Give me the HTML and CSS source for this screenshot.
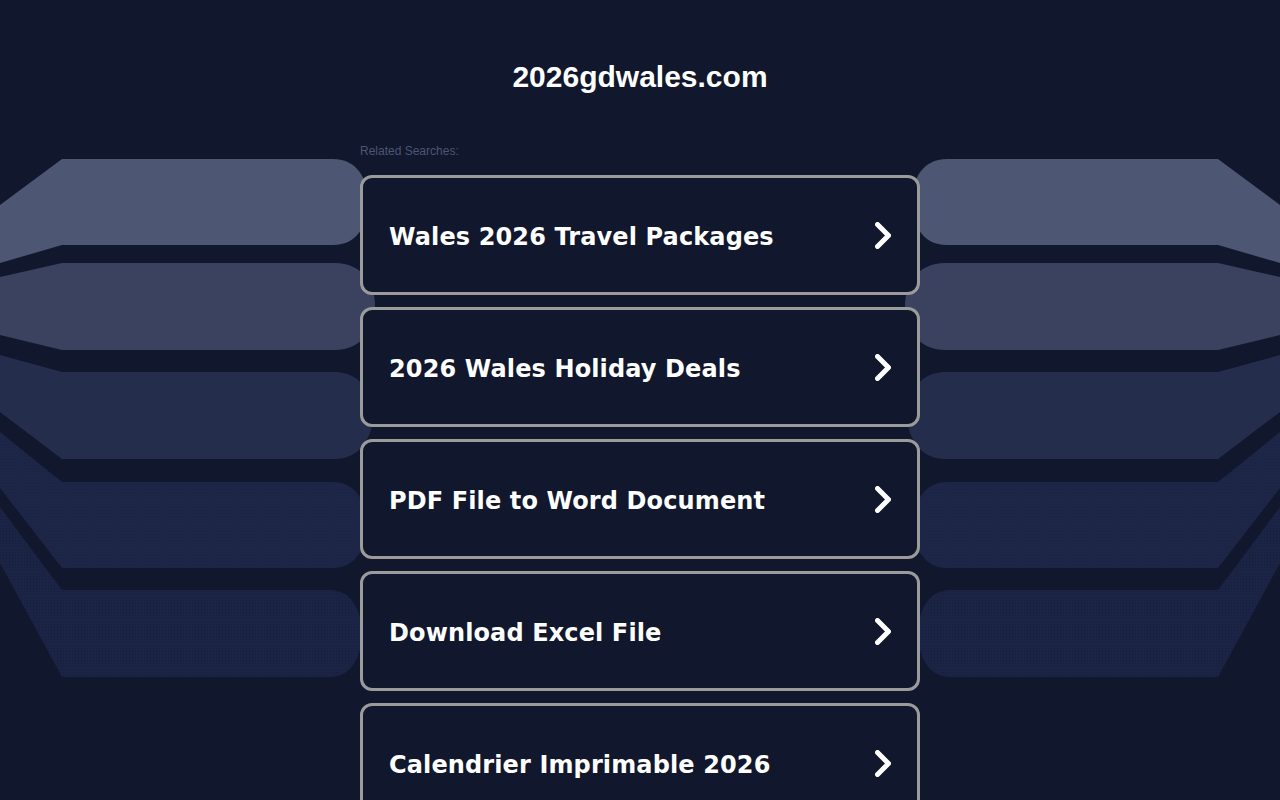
FILE: index.html
```html
<!DOCTYPE html>
<html lang="en">
<head>
<meta charset="utf-8">
<title>2026gdwales.com</title>
<link rel="stylesheet" href="styles.css">
</head>
<body>
<svg class="bg-art" width="1280" height="800" viewBox="0 0 1280 800" aria-hidden="true">
  <defs>
    <pattern id="dots" width="3" height="3" patternUnits="userSpaceOnUse">
      <rect x="0" y="0" width="1" height="1" fill="#141b38"/>
    </pattern>
    <g id="bands">
      <path fill="#4d5672" d="M62,159 L333,159 C358,159 368,180 368,202 C368,224 358,245 333,245 L62,245 L0,263 L0,205 Z"/>
      <path fill="#3a4260" d="M62,263 L335,263 C362,263 375,284 375,306 C375,328 362,350 335,350 L62,350 L0,335 L0,277 Z"/>
      <path fill="#252d4c" d="M62,372 L335,372 C360,372 373,393 373,415 C373,437 360,459 335,459 L62,459 L0,412 L0,355 Z"/>
      <path fill="#1d2646" d="M62,482 L333,482 C356,482 367,503 367,525 C367,547 356,568 333,568 L62,568 L0,488 L0,432 Z"/>
      <path fill="url(#dots)" opacity="0.4" d="M62,482 L333,482 C356,482 367,503 367,525 C367,547 356,568 333,568 L62,568 L0,488 L0,432 Z"/>
      <path fill="#1c2446" d="M62,590 L330,590 C352,590 362,612 362,633 C362,655 352,677 330,677 L62,677 L0,563 L0,507 Z"/>
      <path fill="url(#dots)" opacity="0.7" d="M62,590 L330,590 C352,590 362,612 362,633 C362,655 352,677 330,677 L62,677 L0,563 L0,507 Z"/>
    </g>
  </defs>
  <use href="#bands"/>
  <use href="#bands" transform="translate(1280,0) scale(-1,1)"/>
</svg>

<main class="page">
  <h1 class="domain">2026gdwales.com</h1>
  <section class="related">
    <p class="related-label">Related Searches:</p>
    <ul class="links">
      <li><a class="link-card" href="#"><span class="link-text">Wales 2026 Travel Packages</span><svg class="chev" width="16" height="27" viewBox="0 0 16 27"><path d="M2.5 2.5 L13.5 13.5 L2.5 24.5"/></svg></a></li>
      <li><a class="link-card" href="#"><span class="link-text">2026 Wales Holiday Deals</span><svg class="chev" width="16" height="27" viewBox="0 0 16 27"><path d="M2.5 2.5 L13.5 13.5 L2.5 24.5"/></svg></a></li>
      <li><a class="link-card" href="#"><span class="link-text">PDF File to Word Document</span><svg class="chev" width="16" height="27" viewBox="0 0 16 27"><path d="M2.5 2.5 L13.5 13.5 L2.5 24.5"/></svg></a></li>
      <li><a class="link-card" href="#"><span class="link-text">Download Excel File</span><svg class="chev" width="16" height="27" viewBox="0 0 16 27"><path d="M2.5 2.5 L13.5 13.5 L2.5 24.5"/></svg></a></li>
      <li><a class="link-card" href="#"><span class="link-text">Calendrier Imprimable 2026</span><svg class="chev" width="16" height="27" viewBox="0 0 16 27"><path d="M2.5 2.5 L13.5 13.5 L2.5 24.5"/></svg></a></li>
    </ul>
  </section>
</main>
</body>
</html>
```

FILE: styles.css
```css
html, body {
  margin: 0;
  padding: 0;
  background: #11172c;
  overflow: hidden;
  height: 800px;
}

body {
  position: relative;
  font-family: "Liberation Sans", Arial, sans-serif;
}

.bg-art {
  position: absolute;
  left: 0;
  top: 0;
  z-index: 0;
}

.page {
  position: relative;
  z-index: 1;
  width: 560px;
  margin: 0 auto;
  padding-top: 59px;
}

.domain {
  margin: 0;
  font-family: "Liberation Sans", Arial, sans-serif;
  font-weight: bold;
  font-size: 30px;
  line-height: 36px;
  color: #ffffff;
  text-align: center;
}

.related {
  margin-top: 49px;
}

.related-label {
  margin: 0 0 17px;
  font-size: 12px;
  line-height: 14px;
  color: #4c5674;
}

.links {
  list-style: none;
  margin: 0;
  padding: 0;
  display: flex;
  flex-direction: column;
  gap: 12px;
}

.link-card {
  box-sizing: border-box;
  height: 120px;
  display: flex;
  align-items: center;
  justify-content: space-between;
  padding: 3px 26px 0 26px;
  border: 3px solid #9b9b9b;
  border-radius: 12px;
  background: #11172c;
  text-decoration: none;
  color: #ffffff;
}

.link-text {
  font-family: "DejaVu Sans", Verdana, sans-serif;
  font-weight: bold;
  font-size: 24px;
  letter-spacing: 0.12px;
  color: #ffffff;
}

.chev {
  flex: none;
  margin-top: -3px;
}

.chev path {
  fill: none;
  stroke: #ffffff;
  stroke-width: 5;
  stroke-linecap: round;
  stroke-linejoin: round;
}
```
